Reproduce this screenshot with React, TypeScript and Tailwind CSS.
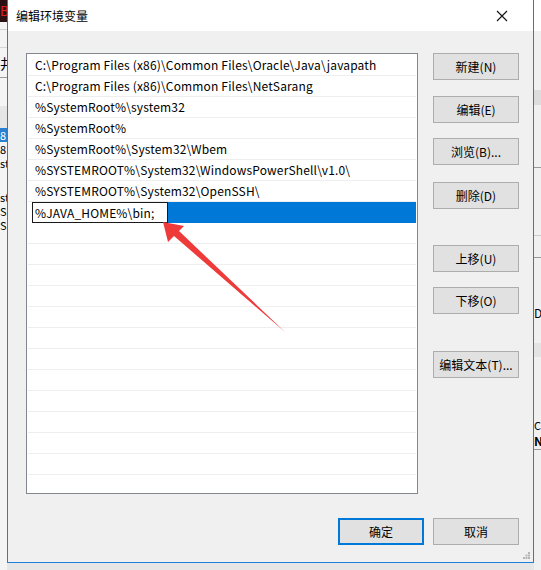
import React from "react";

const rows = [
  "C:\\Program Files (x86)\\Common Files\\Oracle\\Java\\javapath",
  "C:\\Program Files (x86)\\Common Files\\NetSarang",
  "%SystemRoot%\\system32",
  "%SystemRoot%",
  "%SystemRoot%\\System32\\Wbem",
  "%SYSTEMROOT%\\System32\\WindowsPowerShell\\v1.0\\",
  "%SYSTEMROOT%\\System32\\OpenSSH\\",
];

function Btn({ label, className = "" }: { label: string; className?: string }) {
  return (
    <div
      className={`w-[86px] h-[27px] flex items-center justify-center bg-[#e1e1e1] border border-[#adadad] text-[12px] text-black ${className}`}
    >
      {label}
    </div>
  );
}

function Frag({ t, className = "" }: { t: string; className?: string }) {
  return (
    <div className={`h-[14px] text-[11px] leading-[14px] overflow-hidden whitespace-nowrap ${className}`}>{t}</div>
  );
}

export default function App() {
  const empties = Array.from({ length: 13 });
  return (
    <div className="relative w-[541px] h-[570px] overflow-hidden bg-[#e6e6e6] flex font-['Noto_Sans_CJK_SC','Noto_Sans',sans-serif]">
      {/* left background strip */}
      <div className="w-[7px] h-full flex flex-col bg-[#f4f4f4] overflow-hidden">
        <div className="h-[22px] bg-[#2a1010] text-[#e02020] text-[13px] leading-[22px] overflow-hidden whitespace-nowrap">B</div>
        <div className="h-[8px] border-b border-[#cfcfcf]" />
        <div className="h-[18px] border-b border-[#d6d6d6]" />
        <div className="h-[30px] border-b border-[#9a9a9a] text-[14px] leading-[30px] overflow-hidden whitespace-nowrap">井</div>
        <div className="h-[28px]" />
        <div className="h-[22px] bg-[#e6e6e6]" />
        <Frag t="8" className="bg-[#2a7fd0] text-white" />
        <Frag t="8" />
        <Frag t="st" />
        <div className="h-[20px]" />
        <Frag t="st" />
        <Frag t="S" />
        <Frag t="S" />
        <div className="flex-1 bg-[#f4f4f4]" />
      </div>

      {/* dialog */}
      <div className="w-[527px] h-[563px] flex flex-col border-l border-r border-b border-[#1e80d8] bg-[#f0f0f0]">
        {/* title bar */}
        <div className="h-[31px] bg-white flex items-center pl-[8px] pr-[20px] justify-between">
          <span className="text-[12px] text-black">编辑环境变量</span>
          <svg width="12" height="12" viewBox="0 0 12 12" className="mr-[5px]">
            <path d="M1 1 L11 11 M11 1 L1 11" stroke="#111" strokeWidth="1.1" />
          </svg>
        </div>

        {/* body */}
        <div className="flex-1 flex flex-col pl-[18px] pt-[22px]">
          <div className="flex">
            {/* list */}
            <div className="w-[392px] h-[441px] border border-[#828790] bg-white p-px overflow-hidden">
              {rows.map((r) => (
                <div
                  key={r}
                  className="h-[21px] border-b border-[#eeeeee] pl-[7px] text-[12px] leading-[20px] tracking-[0.16px] text-black whitespace-nowrap"
                >
                  {r}
                </div>
              ))}
              <div className="h-[21px] flex">
                <div className="w-[4px]" />
                <div className="w-[136px] h-[21px] border border-[#1a1a1a] bg-white pl-[2px] text-[12px] leading-[19px] tracking-[0.16px] text-black whitespace-nowrap">
                  %JAVA_HOME%\bin;
                </div>
                <div className="flex-1 bg-[#0078d7]" />
              </div>
              {empties.map((_, i) => (
                <div key={i} className="h-[21px] border-b border-[#eeeeee]" />
              ))}
            </div>

            {/* buttons column */}
            <div className="ml-[15px] flex flex-col">
              <Btn label="新建(N)" />
              <Btn label="编辑(E)" className="mt-[16px]" />
              <Btn label="浏览(B)..." className="mt-[15px]" />
              <Btn label="删除(D)" className="mt-[17px]" />
              <Btn label="上移(U)" className="mt-[36px]" />
              <Btn label="下移(O)" className="mt-[15px]" />
              <Btn label="编辑文本(T)..." className="mt-[37px]" />
            </div>
          </div>

          {/* bottom buttons */}
          <div className="mt-[24px] flex justify-end pr-[14px] gap-[9px]">
            <div className="w-[86px] h-[27px] flex items-center justify-center bg-[#e1e1e1] border-2 border-[#0078d7] text-[12px] text-black">
              确定
            </div>
            <Btn label="取消" />
          </div>
        </div>

        {/* resize grip */}
        <div className="flex justify-end pr-[3px] pb-[3px] -mt-[10px]">
          <svg width="7" height="7" viewBox="0 0 7 7">
            <rect x="5" y="0" width="2" height="2" fill="#b5b5b5" />
            <rect x="2.5" y="2.5" width="2" height="2" fill="#b5b5b5" />
            <rect x="5" y="2.5" width="2" height="2" fill="#b5b5b5" />
            <rect x="0" y="5" width="2" height="2" fill="#b5b5b5" />
            <rect x="2.5" y="5" width="2" height="2" fill="#b5b5b5" />
            <rect x="5" y="5" width="2" height="2" fill="#b5b5b5" />
          </svg>
        </div>
      </div>

      {/* right background strip */}
      <div className="w-[7px] h-full flex flex-col bg-[#f0f0f0] text-[12px] text-black overflow-hidden">
        <div className="h-[31px] bg-white" />
        <div className="h-[59px]" />
        <div className="h-[15px] bg-[#dddddd]" />
        <div className="h-[62px]" />
        <div className="h-[1px] bg-[#999999]" />
        <div className="h-[67px]" />
        <div className="h-[1px] bg-[#cccccc]" />
        <div className="h-[21px]" />
        <div className="h-[1px] bg-[#999999]" />
        <div className="h-[47px]" />
        <div className="h-[16px] leading-[16px] whitespace-nowrap">D</div>
        <div className="h-[22px]" />
        <div className="h-[14px] bg-[#e3e3e3]" />
        <div className="h-[60px]" />
        <div className="h-[16px] leading-[16px] text-[11px] whitespace-nowrap">C</div>
        <div className="h-[16px] leading-[16px] font-bold whitespace-nowrap">N</div>
        <div className="h-[1px] bg-[#999999]" />
        <div className="flex-1" />
      </div>

      {/* annotation arrow */}
      <svg className="absolute left-0 top-0 pointer-events-none" width="541" height="570">
        <polygon
          points="163,222 184,226 179,231 285,332 174,236 168,242"
          fill="#ef3a3a"
        />
      </svg>
    </div>
  );
}
